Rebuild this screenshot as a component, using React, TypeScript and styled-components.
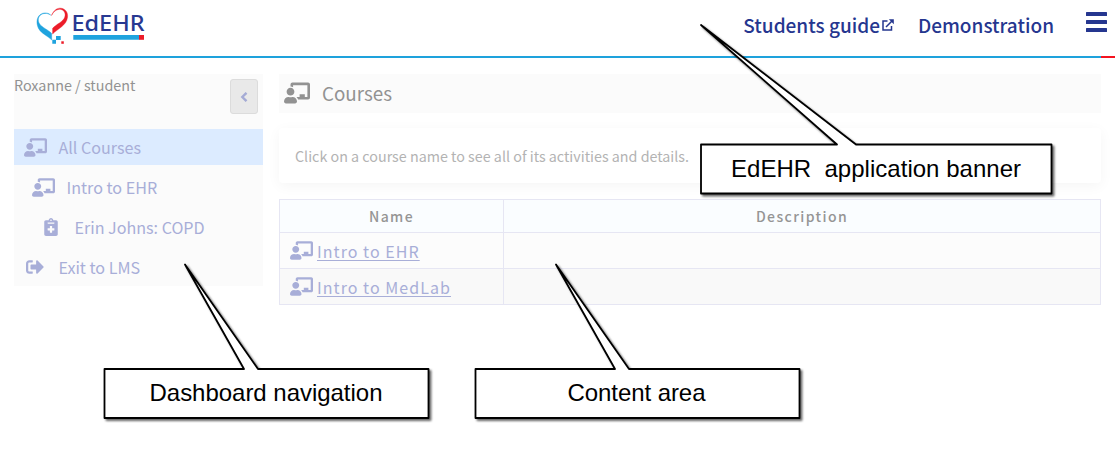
import React from "react";
import styled, { createGlobalStyle } from "styled-components";
import {
  FaChalkboardTeacher,
  FaNotesMedical,
  FaSignOutAlt,
} from "react-icons/fa";

const GlobalStyle = createGlobalStyle`
  * { box-sizing: border-box; }
  body {
    margin: 0;
    background: #fff;
    overflow: hidden;
    font-family: "Noto Sans CJK JP", "Noto Sans", sans-serif;
  }
`;

const Page = styled.div`
  position: relative;
  width: 1115px;
  height: 458px;
`;

const Banner = styled.header`
  display: flex;
  justify-content: space-between;
  height: 56px;
  padding: 6px 8px 0 35px;
`;

const Stripe = styled.div`
  height: 2px;
  background: linear-gradient(to right, #1ea2dc 1101px, #f5131f 1101px);
`;

const BannerLinks = styled.nav`
  display: flex;
  align-items: flex-start;
  color: #25368f;
`;

const BannerLink = styled.a<{ $gap: number }>`
  display: flex;
  align-items: center;
  gap: 2px;
  height: 37px;
  margin-right: ${(p) => p.$gap}px;
  font-size: 19px;
  font-weight: 500;
  line-height: 36px;
  white-space: nowrap;
`;

const MenuButton = styled.div`
  display: flex;
  flex-direction: column;
  gap: 4px;
  width: 21px;
  padding-top: 6px;

  span {
    height: 4px;
    border-radius: 0.5px;
    background: #25368f;
  }
`;

const Body = styled.div`
  display: flex;
  align-items: flex-start;
  gap: 16px;
  padding: 16px 14px 0;
`;

const Sidebar = styled.aside`
  width: 249px;
  height: 212px;
  background: #fbfbfb;
`;

const UserRow = styled.div`
  display: flex;
  justify-content: space-between;
  height: 55px;
  padding-right: 5px;
  color: #929292;
  font-size: 14.35px;
  line-height: 21px;
`;

const CollapseButton = styled.div`
  display: flex;
  align-items: center;
  justify-content: center;
  width: 28px;
  height: 35px;
  margin-top: 5px;
  border: 1px solid #dcdcdc;
  border-radius: 3px;
  background: #e9e9e9;
  color: #a5abd5;
`;

const NavItem = styled.a<{ $indent: number; $active?: boolean; $gap: number; $height: number }>`
  display: flex;
  align-items: center;
  height: ${(p) => p.$height}px;
  padding-left: ${(p) => p.$indent}px;
  gap: ${(p) => p.$gap}px;
  background: ${(p) => (p.$active ? "#dcebff" : "transparent")};
  color: #a8aed8;
  font-size: 16.1px;
  line-height: 20px;
  white-space: nowrap;
`;

const Content = styled.main`
  width: 822px;
`;

const TitleBar = styled.div`
  display: flex;
  align-items: center;
  gap: 12px;
  height: 39px;
  padding: 0 0 2px 5px;
  background: #fbfbfb;
  color: #929292;
  font-size: 18.8px;
  line-height: 28px;
`;

const Notice = styled.div`
  height: 55px;
  margin: 15px 0 16px;
  padding-left: 16px;
  border-radius: 4px;
  box-shadow: 0 3px 14px rgba(0, 0, 0, 0.045);
  color: #b3b3b3;
  font-size: 14.3px;
  line-height: 55px;
`;

const Table = styled.div`
  display: grid;
  grid-template-columns: 224px 597px;
  grid-template-rows: 33px 36px 36px;
  border: solid #e6e6f3;
  border-width: 1px 0 0 1px;
`;

const Cell = styled.div<{ $bg: string; $head?: boolean }>`
  display: flex;
  align-items: center;
  justify-content: ${(p) => (p.$head ? "center" : "flex-start")};
  gap: 4px;
  padding: ${(p) => (p.$head ? "0" : "0 0 1px 10px")};
  border: solid #e6e6f3;
  border-width: 0 1px 1px 0;
  background: ${(p) => p.$bg};
  color: ${(p) => (p.$head ? "#959595" : "#a8aed8")};
  font-size: ${(p) => (p.$head ? 14 : 16)}px;
  font-weight: ${(p) => (p.$head ? 500 : 400)};
  letter-spacing: ${(p) => (p.$head ? 1.4 : 1.05)}px;
  line-height: 20px;
`;

const CourseLink = styled.a`
  padding-top: 1px;
  text-decoration: underline;
  text-decoration-thickness: 1px;
  text-underline-offset: 1.5px;
`;

const Callouts = styled.svg`
  position: absolute;
  inset: 0;
`;

const CalloutText = styled.text`
  font-family: "Liberation Sans", Arial, sans-serif;
  font-size: 24px;
  fill: #000;
  white-space: pre;
`;

const LogoText = styled.text`
  font-family: "Noto Sans", sans-serif;
  font-size: 22.5px;
  font-weight: 500;
  fill: #283891;
`;

const Logo = () => (
  <svg width="112" height="42" viewBox="35 6 112 42">
    <path
      d="M50.8 15.2C48.5 12.6 43.5 11.8 40 14.8C36.3 18 36.2 23.5 38.5 28.5C41.5 34 48 36 51.7 40V33.5C48 29.5 42.5 28 39.7 24C37.5 20.800 38 16.700 41.200 14.600C44.300 12.700 48 13.200 50.800 15.200Z"
      fill="#1fa3de"
      stroke="#1fa3de"
      strokeWidth=".4"
    />
    <path
      d="M51.5 15.5C53.5 10.500 57 7.700 61 8.200C65.500 8.800 68.200 12.500 67.500 17.500C66.400 25.500 58 28.500 52.600 34V28.300C56.500 24 63 22 64.700 17.300C66 13.500 64.300 10 60.800 9.400C57 8.900 53.800 11.200 51.500 15.500Z"
      fill="#ec1c29"
      stroke="#ec1c29"
      strokeWidth=".4"
    />
    <path d="M56 36h4.7v4h-4.7zM52.3 39.7h3.7v4h-3.7z" fill="#1fa3de" />
    <path d="M61.3 41.3h2.5v2.5h-2.5z" fill="#ec1c29" />
    <LogoText x="71.5" y="31" textLength="73" lengthAdjust="spacingAndGlyphs">EdEHR</LogoText>
    <path d="M73.3 35h66v4.8h-66z" fill="#1fa3de" />
    <path d="M139 35h5v4.8h-5z" fill="#ec1c29" />
  </svg>
);

const ExternalIcon = () => (
  <svg width="12" height="12" viewBox="0 0 12 12" fill="none" stroke="currentColor" strokeWidth="1.5">
    <path d="M5.5 2H1v9h8.5V7M4 8L10 2" />
    <path d="M6.8 .2h5V5.200z" fill="currentColor" stroke="none" />
  </svg>
);

const ChevronIcon = () => (
  <svg width="8" height="10" viewBox="0 0 8 10" fill="none" stroke="currentColor" strokeWidth="2.4">
    <path d="M6.5 .8L2.3 5L6.5 9.2" />
  </svg>
);

interface CalloutProps {
  points: string;
  x: number;
  y: number;
  width: number;
  label: string;
}

const Callout = ({ points, x, y, width, label }: CalloutProps) => (
  <g>
    <polygon points={points} fill="#fff" stroke="#000" strokeWidth="1.8" strokeLinejoin="round" filter="url(#drop)" />
    <CalloutText x={x} y={y} textLength={width}>{label}</CalloutText>
  </g>
);

export default function App() {
  return (
    <Page>
      <GlobalStyle />
      <Banner>
        <Logo />
        <BannerLinks>
          <BannerLink $gap={24}>
            Students guide
            <ExternalIcon />
          </BannerLink>
          <BannerLink $gap={32}>Demonstration</BannerLink>
          <MenuButton>
            <span />
            <span />
            <span />
          </MenuButton>
        </BannerLinks>
      </Banner>
      <Stripe />
      <Body>
        <Sidebar>
          <UserRow>
            Roxanne / student
            <CollapseButton>
              <ChevronIcon />
            </CollapseButton>
          </UserRow>
          <NavItem $active $indent={10} $gap={11.5} $height={36}>
            <FaChalkboardTeacher size={23} />
            All Courses
          </NavItem>
          <NavItem $indent={18} $gap={11.5} $height={44}>
            <FaChalkboardTeacher size={23} />
            Intro to EHR
          </NavItem>
          <NavItem $indent={28} $gap={14.5} $height={36}>
            <FaNotesMedical size={18} />
            Erin Johns: COPD
          </NavItem>
          <NavItem $indent={12} $gap={14.5} $height={44}>
            <FaSignOutAlt size={18} />
            Exit to LMS
          </NavItem>
        </Sidebar>
        <Content>
          <TitleBar>
            <FaChalkboardTeacher size={26} />
            Courses
          </TitleBar>
          <Notice>Click on a course name to see all of its activities and details.</Notice>
          <Table>
            <Cell $head $bg="#fafdff">Name</Cell>
            <Cell $head $bg="#fafdff">Description</Cell>
            <Cell $bg="#fcfcfc">
              <FaChalkboardTeacher size={23} />
              <CourseLink>Intro to EHR</CourseLink>
            </Cell>
            <Cell $bg="#fcfcfc" />
            <Cell $bg="#f9f9f9">
              <FaChalkboardTeacher size={23} />
              <CourseLink>Intro to MedLab</CourseLink>
            </Cell>
            <Cell $bg="#f9f9f9" />
          </Table>
        </Content>
      </Body>
      <Callouts width="1115" height="458" viewBox="0 0 1115 458">
        <defs>
          <filter id="drop" x="-10%" y="-10%" width="120%" height="120%">
            <feDropShadow dx="2" dy="2" stdDeviation="1" floodColor="#000" floodOpacity="0.6" />
          </filter>
        </defs>
        <Callout
          points="701,144.5 837,144.5 701,25 856,144.5 1051.5,144.5 1051.5,193.5 701,193.5"
          x={731} y={176.5} width={290} label="EdEHR  application banner"
        />
        <Callout
          points="104.5,369 244,369 185,264.5 258,369 428.5,369 428.5,418 104.5,418"
          x={149.5} y={401} width={233} label="Dashboard navigation"
        />
        <Callout
          points="475.5,369 615,369 556,264.5 629,369 799.5,369 799.5,418 475.5,418"
          x={567.5} y={401} width={138} label="Content area"
        />
      </Callouts>
    </Page>
  );
}
